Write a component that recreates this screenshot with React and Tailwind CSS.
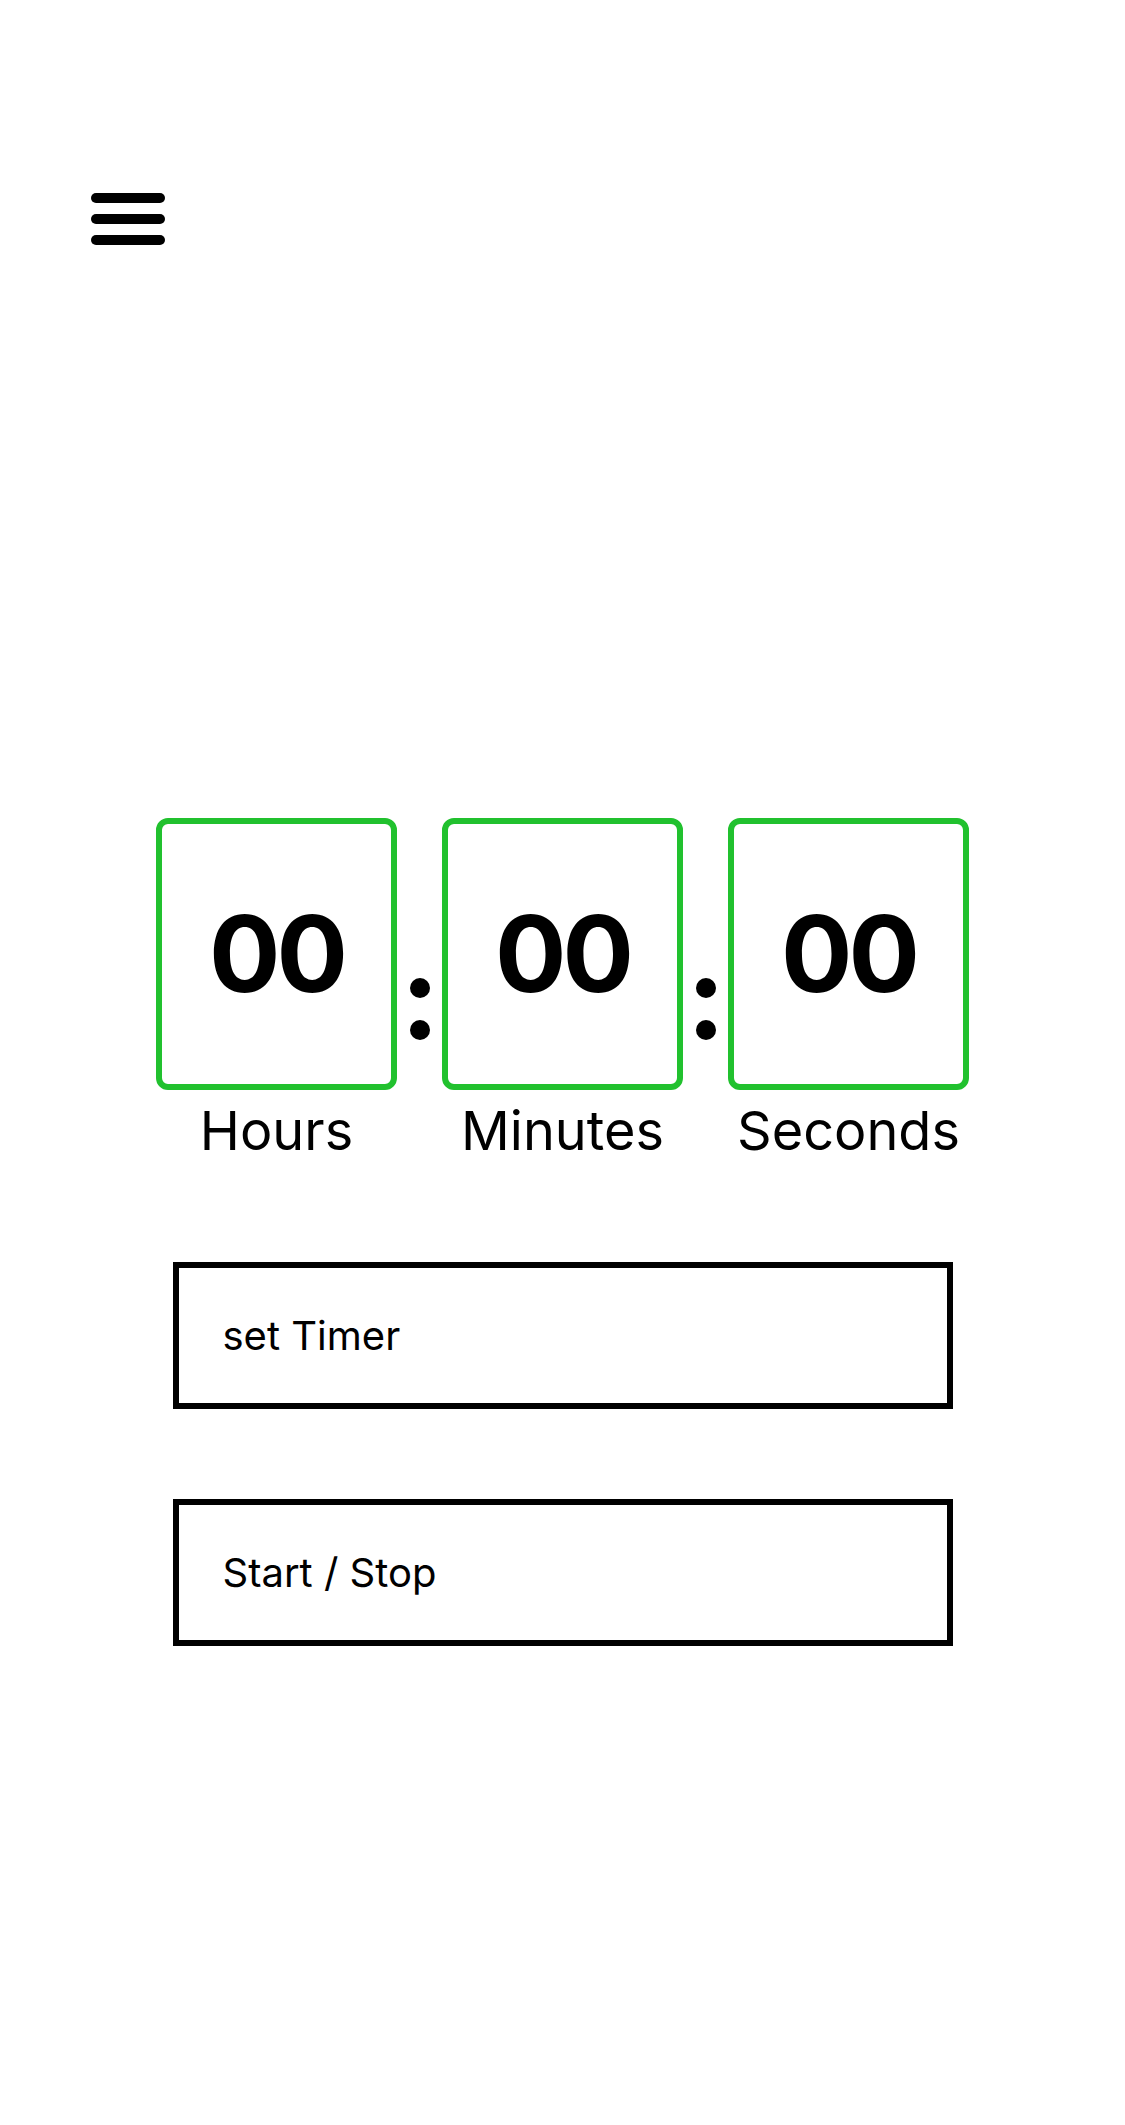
const boxClass = 'flex h-[272px] w-[241px] items-center justify-center rounded-[12px] border-[6px] border-[#21c12e] bg-white';
const buttonClass = 'flex h-[147px] w-[780px] items-center border-[6px] border-black bg-white pl-[44px] text-left text-[40px] leading-none text-black';

function TimeUnit({ value, label }) {
  return (
    <div className="flex w-[241px] flex-col items-center">
      <div className={boxClass}>
        <span className="text-[106px] font-bold leading-none tracking-[-4px] text-black">{value}</span>
      </div>
      <div className="mt-[14px] text-[54px] leading-none text-black">{label}</div>
    </div>
  );
}

function Colon() {
  return (
    <div className="flex w-[45px] flex-col items-center gap-[22px] pt-[160px]">
      <div className="h-[20px] w-[20px] rounded-full bg-black" />
      <div className="h-[20px] w-[20px] rounded-full bg-black" />
    </div>
  );
}

export default function App() {
  return (
    <div className="min-h-[2125px] w-full bg-white font-['Inter',sans-serif] text-black">
      <div className="pl-[91px] pt-[193px]">
        <button type="button" className="flex flex-col gap-[11px]" aria-label="menu">
          <span className="block h-[10px] w-[74px] rounded-full bg-black" />
          <span className="block h-[10px] w-[74px] rounded-full bg-black" />
          <span className="block h-[10px] w-[74px] rounded-full bg-black" />
        </button>
      </div>

      <div className="mt-[573px] flex items-start justify-center">
        <TimeUnit value="00" label="Hours" />
        <Colon />
        <TimeUnit value="00" label="Minutes" />
        <Colon />
        <TimeUnit value="00" label="Seconds" />
      </div>

      <div className="mt-[104px] flex flex-col items-center gap-[90px]">
        <button type="button" className={buttonClass}>set Timer</button>
        <button type="button" className={buttonClass}>Start / Stop</button>
      </div>
    </div>
  );
}
